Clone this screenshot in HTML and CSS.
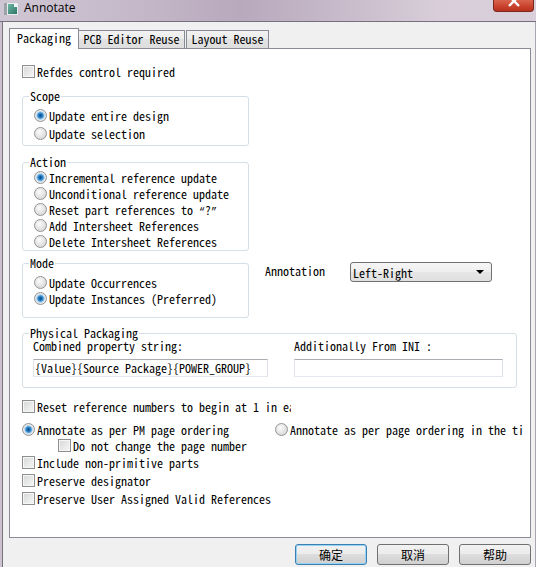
FILE: index.html
```html
<!DOCTYPE html>
<html>

<head>
  <meta charset="UTF-8">
  <title>Annotate</title>
  <link rel="stylesheet" href="styles.css">
</head>

<body>
<div class="window">
  <div class="titlebar">
    <svg class="app-icon" width="14" height="12" viewBox="0 0 14 12">
      <defs>
        <linearGradient id="ico" x1="0" y1="0" x2="1" y2="1">
          <stop offset="0" stop-color="#6fb7a4"/>
          <stop offset="1" stop-color="#2e7566"/>
        </linearGradient>
      </defs>
      <rect x="0" y="0" width="14" height="12" fill="#e9ecee"/>
      <rect x="0" y="0" width="3" height="12" fill="#9aa3a8"/>
      <rect x="4" y="1" width="9" height="10" fill="url(#ico)"/>
      <rect x="10" y="1" width="3" height="3" fill="#f4f6f6"/>
    </svg>
    <span class="title">Annotate</span>
    <div class="close-btn">
      <svg width="14" height="8" viewBox="0 0 14 8">
        <path d="M2 -4 L7 1 L12 -4 M2 6 L7 1 L12 6" stroke="#fff" stroke-width="2.4" fill="none"/>
      </svg>
    </div>
  </div>

  <div class="client">
    <div class="tabs">
      <div class="tab active">Packaging</div>
      <div class="tab pcb">PCB Editor Reuse</div>
      <div class="tab layout">Layout Reuse</div>
    </div>

    <div class="pane">
      <div class="opt row16"><span class="box"></span>Refdes control required</div>

      <fieldset class="group scope">
        <legend>Scope</legend>
        <div class="group-body">
          <div class="opt row18"><span class="radio on"></span>Update entire design</div>
          <div class="opt row18"><span class="radio"></span>Update selection</div>
        </div>
      </fieldset>

      <fieldset class="group action">
        <legend>Action</legend>
        <div class="group-body">
          <div class="opt row16"><span class="radio on"></span>Incremental reference update</div>
          <div class="opt row16"><span class="radio"></span>Unconditional reference update</div>
          <div class="opt row16"><span class="radio"></span><span>Reset part references to <span class="q">“</span>?<span class="q">”</span></span></div>
          <div class="opt row16"><span class="radio"></span>Add Intersheet References</div>
          <div class="opt row16"><span class="radio"></span>Delete Intersheet References</div>
        </div>
      </fieldset>

      <div class="mode-row">
        <fieldset class="group mode">
          <legend>Mode</legend>
          <div class="group-body">
            <div class="opt row16"><span class="radio"></span>Update Occurrences</div>
            <div class="opt row16"><span class="radio on"></span>Update Instances (Preferred)</div>
          </div>
        </fieldset>
        <div class="annot">
          <span class="annot-label">Annotation</span>
          <div class="select">
            <span>Left-Right</span>
            <i class="arrow"></i>
          </div>
        </div>
      </div>

      <fieldset class="group physical">
        <legend>Physical Packaging</legend>
        <div class="group-body cols">
          <div class="col left">
            <div class="field-label">Combined property string:</div>
            <div class="field">{Value}{Source Package}{POWER_GROUP}</div>
          </div>
          <div class="col right">
            <div class="field-label">Additionally From INI :</div>
            <div class="field"></div>
          </div>
        </div>
      </fieldset>

      <div class="opt row18 reset"><span class="box"></span><span class="clip reset-text">Reset reference numbers to begin at 1 in each page</span></div>

      <div class="order-row">
        <div class="opt row18 order-pm"><span class="radio on"></span>Annotate as per PM page ordering</div>
        <div class="opt row18"><span class="radio"></span><span class="clip order-text">Annotate as per page ordering in the title block</span></div>
      </div>
      <div class="opt sub"><span class="box"></span>Do not change the page number</div>
      <div class="opt row18"><span class="box"></span>Include non-primitive parts</div>
      <div class="opt row18"><span class="box"></span>Preserve designator</div>
      <div class="opt row18"><span class="box"></span>Preserve User Assigned Valid References</div>
    </div>

    <div class="buttons">
      <div class="btn default">确定</div>
      <div class="btn">取消</div>
      <div class="btn">帮助</div>
    </div>
  </div>
</div>
</body>

</html>
```

FILE: styles.css
```css
body {
  margin: 0;
  width: 536px;
  height: 567px;
  overflow: hidden;
  background: #f0f0f0;
  font-family: "Noto Sans Mono CJK SC", "Liberation Mono", monospace;
  font-size: 12px;
  color: #000;
}

.window {
  height: 567px;
  display: flex;
  flex-direction: column;
  background: #cbc1cf;
}

/* title bar */
.titlebar {
  height: 21px;
  flex: none;
  display: flex;
  align-items: flex-start;
  border-bottom: 1px solid #75707d;
  background: linear-gradient(to right, #cfc6d3 0%, #c5b9c9 25%, #b8a9bc 45%, #c6b9c9 62%, #d8cdd9 82%, #d9cfda 100%);
}
.app-icon {
  margin: 3px 0 0 4px;
  flex: none;
}
.title {
  margin-left: 6px;
  font-family: "Open Sans", "Noto Sans", sans-serif;
  font-size: 12px;
  line-height: 16px;
  color: #000;
}
.close-btn {
  margin-left: auto;
  margin-right: 2px;
  width: 41px;
  height: 12px;
  box-sizing: border-box;
  border: 1px solid #7e261c;
  border-top: none;
  border-radius: 0 0 4px 4px;
  background: linear-gradient(#d9654f, #c8412c 60%, #b8321f);
  display: flex;
  justify-content: center;
  align-items: flex-start;
}

/* client area */
.client {
  flex: 1;
  margin-left: 2px;
  border-left: 1px solid #77717d;
  border-right: 1px solid #a9a4ad;
  background: #f0f0f0;
  padding: 6px 0 0 6px;
}

.tabs {
  display: flex;
  align-items: flex-end;
  height: 21px;
  margin-bottom: -1px;
  position: relative;
  z-index: 1;
}
.tab {
  box-sizing: border-box;
  border: 1px solid #898c95;
  border-bottom: none;
  text-align: center;
  white-space: nowrap;
}
.tab.active {
  width: 70px;
  height: 21px;
  line-height: 18px;
  background: #fff;
  position: relative;
  z-index: 2;
}
.tab.pcb,
.tab.layout {
  height: 18px;
  margin-bottom: 1px;
  line-height: 16px;
  background: linear-gradient(#f2f2f2, #ebebeb 50%, #e2e2e2 50%, #dedede);
}
.tab.pcb {
  width: 107px;
  margin-left: -1px;
}
.tab.layout {
  width: 83px;
  margin-left: 1px;
}

.pane {
  width: 522px;
  height: 490px;
  box-sizing: border-box;
  border: 1px solid #898c95;
  background: #fff;
  padding: 14px 0 0 12px;
}

/* check boxes and radio buttons */
.opt {
  display: flex;
  align-items: center;
  gap: 2px;
  white-space: nowrap;
}
.row16 {
  height: 16px;
}
.row18 {
  height: 18px;
}
.box {
  flex: none;
  width: 13px;
  height: 13px;
  box-sizing: border-box;
  border: 1px solid #8e8f8f;
  background: linear-gradient(135deg, #d6d7d8, #f7f7f7);
  box-shadow: inset 0 0 0 1px #f6f6f6;
}
.radio {
  flex: none;
  width: 13px;
  height: 13px;
  box-sizing: border-box;
  border: 1px solid #929394;
  border-radius: 50%;
  background: radial-gradient(circle at 40% 35%, #fbfbfb 0, #e7e7e7 45%, #cdcdcd 100%);
}
.radio.on {
  background: radial-gradient(circle at 50% 50%, #0c4c86 0, #1a6db3 1.6px, #4c9ad6 2.8px, #a6d0ef 3.8px, #ebebeb 4.6px, #d2d2d2 100%);
}
.q {
  font-family: "Liberation Mono", monospace;
  font-size: 10px;
}
.clip {
  overflow: hidden;
  white-space: nowrap;
}
.reset-text {
  width: 254px;
}
.order-text {
  width: 234px;
}

/* group boxes */
.group {
  margin: 0;
  padding: 0;
  min-width: 0;
  box-sizing: border-box;
  width: 227px;
  border: 1px solid #d5dfe5;
  border-radius: 3px;
}
.group legend {
  margin-left: 6px;
  padding: 0 1px;
  line-height: 12px;
}
.group-body {
  padding-left: 11px;
}
.scope {
  margin-top: 11px;
}
.scope .group-body {
  padding-top: 4px;
  padding-bottom: 3px;
}
.action {
  margin-top: 10px;
}
.action .group-body {
  padding-top: 1px;
  padding-bottom: 1px;
}

.mode-row {
  display: flex;
  align-items: flex-start;
  margin-top: 6px;
}
.mode .group-body {
  padding-top: 5px;
  padding-bottom: 11px;
}
.annot {
  display: flex;
  align-items: center;
  margin: 5px 0 0 16px;
}
.annot-label {
  width: 85px;
  padding-bottom: 3px;
}
.select {
  width: 142px;
  height: 20px;
  box-sizing: border-box;
  border: 1px solid #707070;
  border-radius: 3px;
  background: linear-gradient(#f6f6f6, #eeeeee 50%, #e6e6e6 50%, #e0e0e0);
  display: flex;
  align-items: center;
  padding: 0 7px 0 2px;
}
.select .arrow {
  margin-left: auto;
  width: 0;
  height: 0;
  border-left: 4px solid transparent;
  border-right: 4px solid transparent;
  border-top: 4px solid #000;
}

.physical {
  width: 495px;
  margin-top: 9px;
}
.cols {
  display: flex;
  gap: 26px;
  padding-left: 10px;
  padding-bottom: 10px;
}
.col.left {
  width: 235px;
}
.col.right {
  width: 209px;
}
.field-label {
  margin-top: 1px;
  line-height: 12px;
}
.field {
  margin-top: 7px;
  height: 18px;
  box-sizing: border-box;
  border: 1px solid #abadb3;
  border-color: #abadb3 #dbdfe6 #e3e9ef #e2e3ea;
  background: #fff;
  padding-left: 1px;
  line-height: 16px;
  white-space: nowrap;
  overflow: hidden;
}

/* bottom options */
.reset {
  margin-top: 9px;
}
.order-row {
  display: flex;
  margin-top: 5px;
}
.order-pm {
  width: 253px;
}
.sub {
  height: 15px;
  margin-left: 36px;
}

/* dialog buttons */
.buttons {
  width: 522px;
  display: flex;
  justify-content: flex-end;
  gap: 10px;
  margin-top: 6px;
}
.btn {
  width: 72px;
  height: 21px;
  box-sizing: border-box;
  border: 1px solid #707070;
  border-radius: 3px;
  background: linear-gradient(#f2f2f2, #ebebeb 50%, #dddddd 50%, #cfcfcf);
  font-family: "Noto Sans CJK SC", sans-serif;
  font-size: 12px;
  line-height: 19px;
  text-align: center;
}
.btn.default {
  border-color: #3c7fb1;
  box-shadow: inset 0 0 0 1px #94d3f4;
}
```
